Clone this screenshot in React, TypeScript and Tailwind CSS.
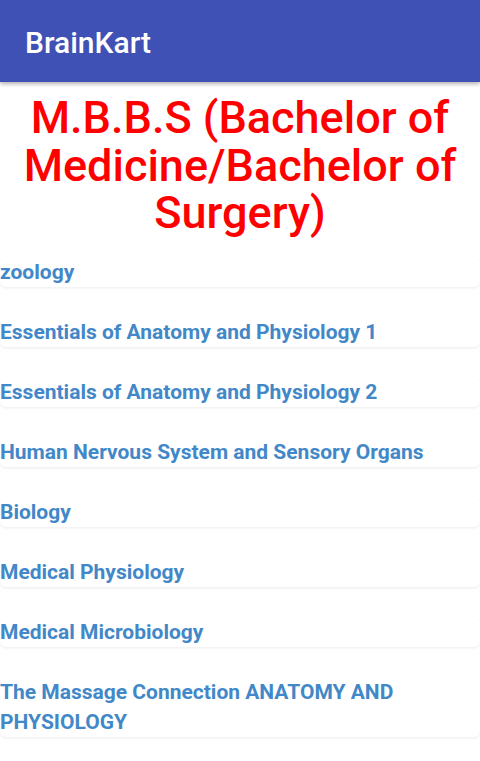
const topics = [
  "zoology",
  "Essentials of Anatomy and Physiology 1",
  "Essentials of Anatomy and Physiology 2",
  "Human Nervous System and Sensory Organs",
  "Biology",
  "Medical Physiology",
  "Medical Microbiology",
  "The Massage Connection ANATOMY AND PHYSIOLOGY",
];

export default function App() {
  return (
    <div className="min-h-screen bg-white font-['Roboto',sans-serif]">
      <header className="flex h-[82px] items-center bg-[#3f51b5] px-[25px] pt-[3px] shadow-[0_2px_4px_rgba(0,0,0,0.3)]">
        <h1 className="text-[30px] font-medium text-white">BrainKart</h1>
      </header>

      <h2 className="mt-[12px] px-2 text-center text-[45px] font-medium leading-[47.5px] text-[#ff0000]">
        M.B.B.S (Bachelor of Medicine/Bachelor of Surgery)
      </h2>

      <ul className="mt-[20px] flex flex-col gap-[30px]">
        {topics.map((t) => (
          <li
            key={t}
            className="rounded-md bg-white text-[21px] font-bold leading-[30px] text-[#4288c8] shadow-[0_1px_3px_rgba(0,0,0,0.08)]"
          >
            {t}
          </li>
        ))}
      </ul>
    </div>
  );
}
